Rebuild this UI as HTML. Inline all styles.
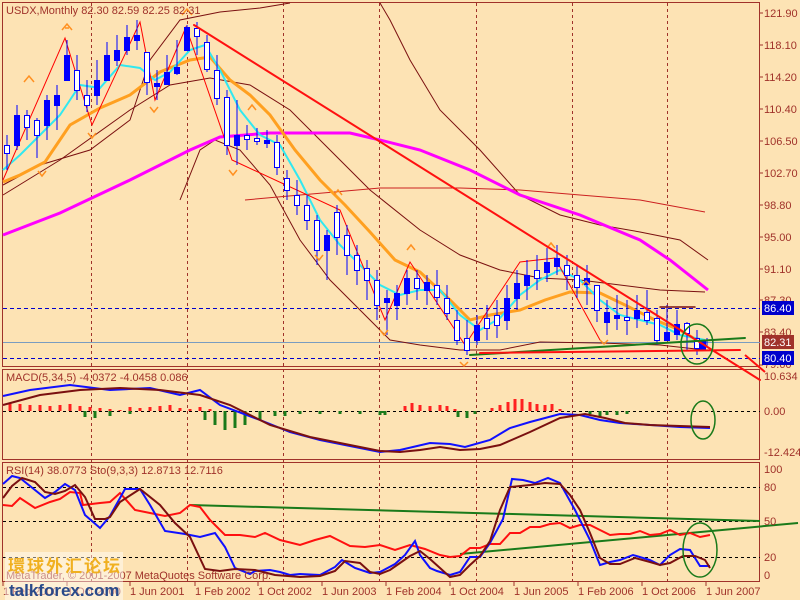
<!DOCTYPE html>
<html><head><meta charset="utf-8"><style>
body{margin:0;background:#FDE3B4;}
svg{display:block;font-family:"Liberation Sans",sans-serif;}
</style></head><body>
<svg width="800" height="600" viewBox="0 0 800 600" xmlns="http://www.w3.org/2000/svg">
<rect width="800" height="600" fill="#FDE3B4"/>
<!-- pane borders -->
<g fill="none" stroke="#A0322A" stroke-width="1">
<rect x="2.5" y="2.5" width="757" height="364"/>
<rect x="2.5" y="369.5" width="757" height="90"/>
<rect x="2.5" y="462.5" width="757" height="119"/>
</g>
<!-- vertical dashed -->
<g stroke="#A0322A" stroke-dasharray="3,3">
<line x1="91.5" y1="3" x2="91.5" y2="582"/><line x1="187.5" y1="3" x2="187.5" y2="582"/>
<line x1="283.5" y1="3" x2="283.5" y2="582"/><line x1="379.5" y1="3" x2="379.5" y2="582"/>
<line x1="476.5" y1="3" x2="476.5" y2="582"/><line x1="572.5" y1="3" x2="572.5" y2="582"/>
<line x1="667.5" y1="3" x2="667.5" y2="582"/>
</g>
<!-- horizontal dashed -->
<g stroke="#0000CC" stroke-dasharray="4,3"><line x1="3" y1="308.5" x2="760" y2="308.5"/><line x1="3" y1="358.5" x2="760" y2="358.5"/></g>
<line x1="3" y1="342.5" x2="760" y2="342.5" stroke="#7A9CC0"/>
<g stroke="#000" stroke-dasharray="3,3"><line x1="3" y1="411.5" x2="760" y2="411.5"/>
<line x1="3" y1="487.5" x2="760" y2="487.5"/><line x1="3" y1="521.5" x2="760" y2="521.5"/><line x1="3" y1="557.5" x2="760" y2="557.5"/></g>
<!-- bollinger / envelopes -->
<g fill="none" stroke="#7A1010" stroke-width="1">
<polyline points="3,185 40,165 90,150 130,120 150,60 180,20 220,12 260,8 290,3"/>
<polyline points="380,3 390,20 410,60 440,110 480,150 520,195 560,215 600,225 640,232 680,240 708,260"/>
<polyline points="3,195 60,160 130,110 170,85 210,78 250,85 290,110 330,150 370,190 420,230 460,255 500,270 540,278 580,280 620,285 660,290 705,292"/>
<polyline points="180,200 200,150 215,140 240,150 270,185 300,240 330,280 360,310 390,340 420,345 460,350 500,350 540,342 600,343 660,345 705,350"/>
<polyline points="245,200 300,195 380,188 460,188 520,190 580,195 640,200 705,212" stroke="#CC2020"/>
</g>
<!-- magenta MA -->
<polyline fill="none" stroke="#FF00FF" stroke-width="3" points="3,235 60,213 130,180 190,150 220,137 270,133 350,133 380,140 420,150 470,170 520,195 580,215 640,240 670,260 708,290"/>
<!-- orange MA -->
<polyline fill="none" stroke="#FFA020" stroke-width="3" points="3,182 20,175 45,162 70,125 100,108 130,95 160,72 190,60 210,57 230,80 250,95 270,115 295,150 320,180 345,205 370,232 395,260 420,272 450,300 470,320 490,315 520,310 545,300 570,292 600,293 625,305 655,320 680,330 705,345"/>
<!-- cyan MA -->
<polyline fill="none" stroke="#30E8F0" stroke-width="2" points="3,170 20,155 40,135 60,115 80,85 100,88 120,65 140,68 155,80 170,72 190,50 205,45 220,70 240,110 260,135 280,145 300,180 320,220 340,245 360,265 380,285 400,295 420,290 440,290 460,315 480,330 500,318 520,295 540,280 560,270 580,280 600,300 620,315 640,320 660,325 680,335 705,340"/>
<!-- zigzag -->
<polyline fill="none" stroke="#FF0000" stroke-width="1" points="3,180 65,38 92,125 140,22 155,100 186,27 232,160 340,210 385,320 410,262 465,345 520,262 555,258 600,340"/>
<!-- candles (close series) -->
<g stroke="#0000FF" stroke-width="1">
<path d="M7,135V170M17,105V150M27,110V140M37,118V158M47,95V140M57,85V130M67,40V80M77,55V100M87,80V112M97,60V105M107,42V75M117,35V66M127,25V55M137,20V50M147,55V95M157,70V100M167,55V85M177,40V75M187,25V50M197,22V55M207,35V72M217,55V105M227,90V155M237,100V165M247,125V150M257,128V145M267,130V148M277,135V175M287,170V200M297,180V215M307,195V230M317,215V265M327,230V280M337,205V255M347,225V275M357,245V285M367,260V300M377,270V320M387,290V335M397,285V320M407,270V305M417,270V300M427,275V305M437,270V305M447,285V320M457,310V345M467,320V355M477,315V345M487,305V340M497,300V338M507,285V330M517,270V310M527,260V300M537,255V290M547,248V282M557,245V275M567,255V290M577,265V298M587,265V305M597,285V322M607,300V335M617,295V330M627,300V335M637,295V328M647,290V325M657,310V345M667,305V340M677,310V340M687,322V350M697,330V355M707,338V348"/>
</g>
<g stroke="#0000FF" stroke-width="1">
<rect x="4.5" y="145.5" width="5" height="8" fill="#fff"/>
<rect x="14.5" y="115.5" width="5" height="30" fill="#00f"/>
<rect x="24.5" y="115.5" width="5" height="12" fill="#fff"/>
<rect x="34.5" y="120.5" width="5" height="15" fill="#fff"/>
<rect x="44.5" y="100.5" width="5" height="25" fill="#00f"/>
<rect x="54.5" y="95.5" width="5" height="10" fill="#00f"/>
<rect x="64.5" y="55.5" width="5" height="25" fill="#00f"/>
<rect x="74.5" y="70.5" width="5" height="20" fill="#fff"/>
<rect x="84.5" y="95.5" width="5" height="10" fill="#fff"/>
<rect x="94.5" y="80.5" width="5" height="15" fill="#00f"/>
<rect x="104.5" y="55.5" width="5" height="25" fill="#00f"/>
<rect x="114.5" y="50.5" width="5" height="10" fill="#00f"/>
<rect x="124.5" y="37.5" width="5" height="13" fill="#00f"/>
<rect x="134.5" y="35.5" width="5" height="5" fill="#00f"/>
<rect x="144.5" y="52.5" width="5" height="30" fill="#fff"/>
<rect x="154.5" y="83.5" width="5" height="3" fill="#00f"/>
<rect x="164.5" y="72.5" width="5" height="12" fill="#00f"/>
<rect x="174.5" y="67.5" width="5" height="6" fill="#00f"/>
<rect x="184.5" y="27.5" width="5" height="23" fill="#00f"/>
<rect x="194.5" y="28.5" width="5" height="8" fill="#fff"/>
<rect x="204.5" y="42.5" width="5" height="27" fill="#fff"/>
<rect x="214.5" y="70.5" width="5" height="28" fill="#fff"/>
<rect x="224.5" y="97.5" width="5" height="48" fill="#fff"/>
<rect x="234.5" y="135.5" width="5" height="10" fill="#00f"/>
<rect x="244.5" y="135.5" width="5" height="4" fill="#fff"/>
<rect x="254.5" y="138.5" width="5" height="3" fill="#fff"/>
<rect x="264.5" y="140.5" width="5" height="3" fill="#00f"/>
<rect x="274.5" y="142.5" width="5" height="25" fill="#fff"/>
<rect x="284.5" y="178.5" width="5" height="12" fill="#fff"/>
<rect x="294.5" y="195.5" width="5" height="10" fill="#fff"/>
<rect x="304.5" y="205.5" width="5" height="15" fill="#fff"/>
<rect x="314.5" y="220.5" width="5" height="30" fill="#fff"/>
<rect x="324.5" y="235.5" width="5" height="15" fill="#00f"/>
<rect x="334.5" y="212.5" width="5" height="25" fill="#fff"/>
<rect x="344.5" y="235.5" width="5" height="20" fill="#fff"/>
<rect x="354.5" y="255.5" width="5" height="15" fill="#fff"/>
<rect x="364.5" y="268.5" width="5" height="12" fill="#fff"/>
<rect x="374.5" y="280.5" width="5" height="25" fill="#fff"/>
<rect x="384.5" y="298.5" width="5" height="4" fill="#00f"/>
<rect x="394.5" y="293.5" width="5" height="12" fill="#00f"/>
<rect x="404.5" y="278.5" width="5" height="15" fill="#00f"/>
<rect x="414.5" y="278.5" width="5" height="10" fill="#fff"/>
<rect x="424.5" y="282.5" width="5" height="8" fill="#00f"/>
<rect x="434.5" y="285.5" width="5" height="12" fill="#fff"/>
<rect x="444.5" y="298.5" width="5" height="15" fill="#fff"/>
<rect x="454.5" y="320.5" width="5" height="20" fill="#fff"/>
<rect x="464.5" y="338.5" width="5" height="12" fill="#fff"/>
<rect x="474.5" y="325.5" width="5" height="15" fill="#00f"/>
<rect x="484.5" y="318.5" width="5" height="10" fill="#fff"/>
<rect x="494.5" y="315.5" width="5" height="10" fill="#fff"/>
<rect x="504.5" y="298.5" width="5" height="22" fill="#00f"/>
<rect x="514.5" y="283.5" width="5" height="15" fill="#00f"/>
<rect x="524.5" y="275.5" width="5" height="10" fill="#00f"/>
<rect x="534.5" y="270.5" width="5" height="8" fill="#fff"/>
<rect x="544.5" y="262.5" width="5" height="10" fill="#00f"/>
<rect x="554.5" y="258.5" width="5" height="8" fill="#00f"/>
<rect x="564.5" y="265.5" width="5" height="10" fill="#fff"/>
<rect x="574.5" y="275.5" width="5" height="12" fill="#fff"/>
<rect x="584.5" y="278.5" width="5" height="6" fill="#00f"/>
<rect x="594.5" y="285.5" width="5" height="25" fill="#fff"/>
<rect x="604.5" y="312.5" width="5" height="10" fill="#00f"/>
<rect x="614.5" y="315.5" width="5" height="3" fill="#00f"/>
<rect x="624.5" y="317.5" width="5" height="3" fill="#fff"/>
<rect x="634.5" y="310.5" width="5" height="8" fill="#00f"/>
<rect x="644.5" y="312.5" width="5" height="8" fill="#fff"/>
<rect x="654.5" y="318.5" width="5" height="22" fill="#fff"/>
<rect x="664.5" y="332.5" width="5" height="8" fill="#00f"/>
<rect x="674.5" y="324.5" width="5" height="10" fill="#00f"/>
<rect x="684.5" y="323.5" width="5" height="10" fill="#fff"/>
<rect x="694.5" y="338.5" width="5" height="10" fill="#fff"/>
<rect x="700.5" y="341.5" width="5" height="8" fill="#00f"/>
</g>
<!-- fractal arrows -->
<g fill="none" stroke="#FF9020" stroke-width="1.5">
<path d="M62,30l5,-6l5,6M65,28l4,0"/><path d="M24,82l5,-6l5,6"/><path d="M182,15l5,-6l5,6"/><path d="M248,110l4,-5l4,5"/><path d="M334,195l4,-5l4,5"/><path d="M407,250l4,-5l4,5"/><path d="M547,248l4,-5l4,5"/><path d="M582,285l4,-4l4,4"/>
<path d="M38,171l4,5l4,-5"/><path d="M88,133l4,5l4,-5"/><path d="M150,107l4,5l4,-5"/><path d="M229,170l4,5l4,-5"/><path d="M315,255l4,5l4,-5"/><path d="M380,330l4,5l4,-5"/><path d="M460,362l4,4l4,-4"/><path d="M600,340l4,4l4,-4"/>
</g>
<!-- trend lines -->
<g fill="none" stroke-linecap="round">
<line x1="194" y1="25" x2="760" y2="380" stroke="#FF1010" stroke-width="2"/>
<line x1="470" y1="355" x2="745" y2="338" stroke="#1A7A1A" stroke-width="2"/>
<line x1="480" y1="353" x2="740" y2="350" stroke="#FF1010" stroke-width="2"/>
<line x1="660" y1="307" x2="695" y2="307" stroke="#7A1010" stroke-width="1.5"/>
<ellipse cx="697" cy="344" rx="16" ry="20" stroke="#1A7A1A" stroke-width="1.5"/>
</g>
<!-- MACD histogram -->
<g stroke-width="3">
<path stroke="#FF2020" d="M10,411V403M20,411V404M30,411V405M40,411V405M50,411V406M60,411V405M70,411V404M80,411V406M90,411V407M100,411V408M110,411V409M120,411V410M130,411V407M140,411V408M150,411V407M160,411V406M170,411V405M180,411V408M190,411V409M200,411V407M210,411V409M405,411V406M412,411V403M420,411V405M430,411V406M440,411V405M447,411V406M455,411V409M492,411V408M500,411V405M508,411V402M515,411V399M522,411V399M530,411V402M537,411V404M545,411V405M552,411V404M560,411V409"/>
<path stroke="#1A7A1A" d="M85,411V417M95,411V418M110,411V416M130,411V414M205,411V420M215,411V425M225,411V430M235,411V428M245,411V425M260,411V420M275,411V416M285,411V416M300,411V414M320,411V414M340,411V414M360,411V414M380,411V415M382,411V413M385,411V415M458,411V417M467,411V418M475,411V414M590,411V414M600,411V417M607,411V415M617,411V415M627,411V414"/>
</g>
<polyline fill="none" stroke="#1010FF" stroke-width="2" points="3,396 30,390 70,385 110,390 150,388 180,395 200,390 220,405 260,420 290,432 320,440 360,448 380,452 400,450 430,443 450,444 465,447 490,440 510,428 530,422 560,414 580,415 600,420 620,423 650,425 680,427 710,428"/>
<polyline fill="none" stroke="#7A1010" stroke-width="2" points="3,405 40,395 80,390 120,388 160,390 200,395 230,405 270,425 310,437 350,445 380,451 400,452 420,450 440,447 460,450 480,449 500,445 530,432 560,418 585,414 605,418 625,423 650,425 680,426 710,427"/>
<ellipse cx="703" cy="420" rx="12" ry="19" fill="none" stroke="#1A7A1A" stroke-width="1.5"/>
<!-- RSI pane -->
<line x1="190" y1="505" x2="760" y2="521" stroke="#1A7A1A" stroke-width="2"/>
<line x1="460" y1="554" x2="798" y2="523" stroke="#1A7A1A" stroke-width="2"/>
<polyline fill="none" stroke="#FF1010" stroke-width="2" points="3,505 12,506 20,498 35,508 50,502 60,499 70,492 80,493 83,505 100,503 110,502 120,493 135,510 150,513 165,516 180,513 190,505 200,507 210,520 225,535 240,535 255,537 265,533 280,540 300,545 315,540 330,536 338,540 350,546 365,547 380,545 395,550 410,545 425,549 440,555 450,557 460,556 470,548 480,548 490,544 500,544 510,533 520,533 530,527 540,527 550,524 560,523 570,528 580,525 590,525 600,530 610,535 620,534 630,534 640,531 650,535 660,534 670,530 680,535 690,533 700,537 710,535"/>
<polyline fill="none" stroke="#1010FF" stroke-width="2" points="3,484 12,476 20,478 30,486 45,498 55,492 65,484 75,490 85,515 100,528 110,516 125,489 140,489 150,505 165,531 185,534 200,537 215,533 225,547 235,568 250,574 255,571 270,570 280,572 290,575 300,574 320,575 335,567 342,560 355,568 370,573 380,572 395,564 405,555 415,541 420,555 430,568 437,571 450,575 460,572 470,557 480,557 490,543 503,519 512,479 523,480 535,483 548,478 560,483 575,510 590,540 600,565 610,562 620,560 633,555 650,560 660,565 670,555 680,549 690,550 700,566 710,566"/>
<polyline fill="none" stroke="#7A1010" stroke-width="2" points="3,498 12,486 22,478 35,482 45,492 55,494 65,491 75,485 85,497 95,519 105,519 110,517 120,502 140,489 160,505 175,523 190,537 205,569 220,571 235,569 255,570 275,575 300,577 320,576 335,571 345,561 360,563 370,572 380,574 390,570 400,563 410,556 420,551 430,559 440,568 450,577 460,575 470,565 480,556 490,541 500,510 510,487 530,485 545,483 560,484 570,495 580,510 590,533 600,558 610,564 620,564 635,558 650,562 660,565 670,563 683,556 695,556 705,560 710,568"/>
<ellipse cx="700" cy="550" rx="17" ry="27" fill="none" stroke="#1A7A1A" stroke-width="1.5"/>
<!-- right axis -->
<g fill="#A0322A" font-size="11">
<text x="764" y="17">121.90</text><text x="764" y="49">118.10</text><text x="764" y="81">114.20</text><text x="764" y="113">110.40</text><text x="764" y="145">106.50</text><text x="764" y="177">102.70</text><text x="764" y="209">98.80</text><text x="764" y="241">95.00</text><text x="764" y="273">91.10</text><text x="764" y="304">87.30</text><text x="764" y="336">83.40</text><text x="764" y="368">79.60</text>
<text x="764" y="380">10.634</text><text x="764" y="415">0.00</text><text x="764" y="456">-12.424</text>
<text x="764" y="473">100</text><text x="764" y="491">80</text><text x="764" y="525">50</text><text x="764" y="561">20</text><text x="764" y="579">0</text>
</g>
<g stroke="#A0322A"><path d="M760,13h3M760,45h3M760,77h3M760,109h3M760,141h3M760,173h3M760,205h3M760,237h3M760,269h3M760,300h3M760,332h3M760,365h3"/></g>
<rect x="762" y="301" width="32" height="14" fill="#0000CC"/><text x="764" y="312" fill="#fff" font-size="11">86.40</text>
<rect x="762" y="335" width="32" height="14" fill="#A0322A"/><text x="764" y="346" fill="#fff" font-size="11">82.31</text>
<rect x="762" y="351" width="32" height="14" fill="#0000CC"/><text x="764" y="362" fill="#fff" font-size="11">80.40</text>
<line x1="745" y1="355" x2="765" y2="372" stroke="#FF1010" stroke-width="2"/>
<!-- labels -->
<g fill="#A0322A" font-size="11">
<text x="6" y="14">USDX,Monthly  82.30 82.59 82.25 82.31</text>
<text x="6" y="381">MACD(5,34,5) -4.0372 -4.0458 0.086</text>
<text x="6" y="474">RSI(14) 38.0773  Sto(9,3,3) 12.8713 12.7116</text>
<text x="6" y="579">MetaTrader, © 2001-2007 MetaQuotes Software Corp.</text>
<text x="3" y="595">1 Feb 2000</text><text x="67" y="595">1 Oct 2000</text><text x="130" y="595">1 Jun 2001</text><text x="195" y="595">1 Feb 2002</text><text x="258" y="595">1 Oct 2002</text><text x="322" y="595">1 Jun 2003</text><text x="386" y="595">1 Feb 2004</text><text x="450" y="595">1 Oct 2004</text><text x="514" y="595">1 Jun 2005</text><text x="578" y="595">1 Feb 2006</text><text x="642" y="595">1 Oct 2006</text><text x="706" y="595">1 Jun 2007</text>
</g>
<g stroke="#A0322A"><path d="M3,582v4M67,582v4M130,582v4M195,582v4M258,582v4M322,582v4M386,582v4M450,582v4M514,582v4M578,582v4M642,582v4M706,582v4"/></g>
<!-- watermark -->
<rect x="5" y="552" width="118" height="48" fill="#fff" opacity="0.45"/>
<text x="8" y="572" font-family="'Noto Sans CJK SC',sans-serif" font-size="17" font-weight="bold" fill="#F0B020" letter-spacing="2">環球外汇论坛</text>
<text x="9" y="596" font-size="17" font-weight="bold" fill="#2A4A8A">talkforex.com</text>
</svg>
</body></html>
